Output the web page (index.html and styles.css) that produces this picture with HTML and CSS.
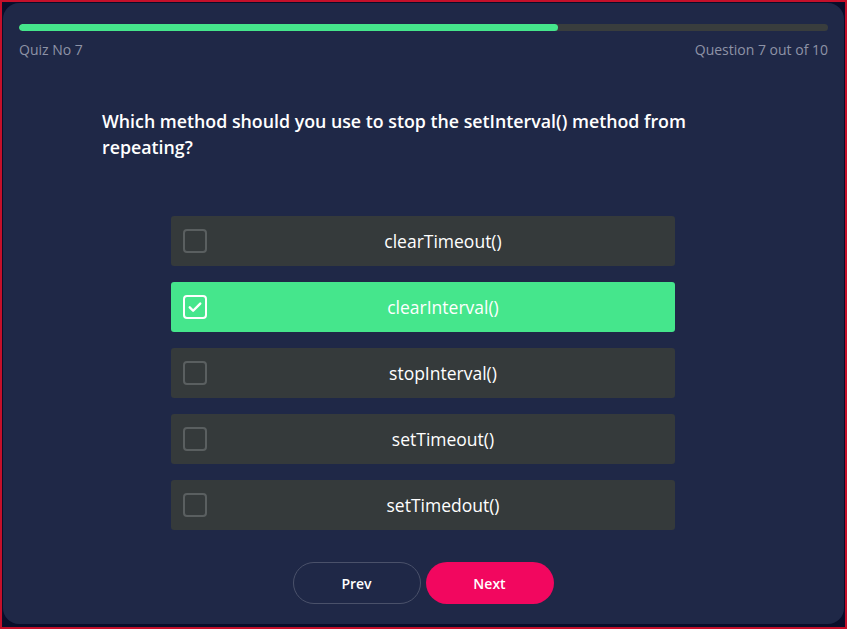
FILE: index.html
```html
<!DOCTYPE html>
<html lang="en">
<head>
<meta charset="utf-8">
<title>Quiz</title>
<link rel="stylesheet" href="styles.css">
</head>
<body>
<div class="frame">
  <div class="card">
    <div class="progress"><div class="progress-fill" style="width:66.6%"></div></div>
    <div class="meta">
      <span>Quiz No 7</span>
      <span>Question 7 out of 10</span>
    </div>
    <div class="content">
      <h1 class="question">Which method should you use to stop the setInterval() method from repeating?</h1>
      <div class="options">
        <div class="option"><span class="box"></span><span class="label">clearTimeout()</span></div>
        <div class="option selected"><span class="box"><svg viewBox="0 0 24 24" width="18" height="18"><path d="M5 12.5l4.5 4.5L19 7.5" fill="none" stroke="#fff" stroke-width="3.2" stroke-linecap="round" stroke-linejoin="round"/></svg></span><span class="label">clearInterval()</span></div>
        <div class="option"><span class="box"></span><span class="label">stopInterval()</span></div>
        <div class="option"><span class="box"></span><span class="label">setTimeout()</span></div>
        <div class="option"><span class="box"></span><span class="label">setTimedout()</span></div>
      </div>
      <div class="actions">
        <button class="btn btn-prev">Prev</button>
        <button class="btn btn-next">Next</button>
      </div>
    </div>
  </div>
</div>
</body>
</html>
```
FILE: styles.css
```css
* { box-sizing: border-box; }
html, body { margin: 0; padding: 0; }
body {
  font-family: "Open Sans", "Liberation Sans", sans-serif;
  background: #0a0e2a;
}
.frame {
  width: 847px;
  height: 629px;
  border: 2px solid #c4102a;
  padding: 1px 1px 3px 1px;
  background: #0a0e2a;
}
.card {
  height: 100%;
  background: #1f2847;
  border-radius: 16px;
  padding: 21px 16px 0 16px;
}
.progress {
  height: 7px;
  background: #393d3d;
  border-radius: 4px;
  overflow: hidden;
}
.progress-fill {
  height: 100%;
  background: #45e68c;
  border-radius: 4px;
}
.meta {
  display: flex;
  justify-content: space-between;
  margin-top: 9px;
  font-size: 14px;
  line-height: 20px;
  color: #8e93a6;
  font-weight: 500;
}
.content {
  width: 642px;
  margin: 0 0 0 83px;
}
.question {
  margin: 48px 0 0;
  font-size: 17.8px;
  line-height: 26px;
  font-weight: 600;
  color: #ffffff;
}
.options {
  width: 504px;
  margin: 56px 0 0 69px;
  display: flex;
  flex-direction: column;
  gap: 16px;
}
.option {
  height: 50px;
  background: #353a3b;
  border-radius: 3px;
  display: flex;
  align-items: center;
  padding: 0 0 1px 12px;
  color: #ffffff;
  font-size: 17.5px;
  font-weight: 500;
}
.option.selected { background: #45e68c; }
.box {
  width: 24px;
  height: 24px;
  border: 2px solid #5a5f60;
  border-radius: 4px;
  display: flex;
  align-items: center;
  justify-content: center;
  flex: none;
}
.selected .box { border-color: #ffffff; }
.label {
  flex: 1;
  margin-left: 4px;
  text-align: center;
}
.actions {
  display: flex;
  justify-content: center;
  gap: 5px;
  margin-top: 32px;
}
.btn {
  width: 128px;
  height: 42px;
  border-radius: 21px;
  font-family: inherit;
  font-size: 14px;
  font-weight: 600;
  color: #ffffff;
  cursor: pointer;
}
.btn-prev {
  background: transparent;
  border: 1px solid #4a516a;
}
.btn-next {
  background: #f2075f;
  border: none;
}
```
